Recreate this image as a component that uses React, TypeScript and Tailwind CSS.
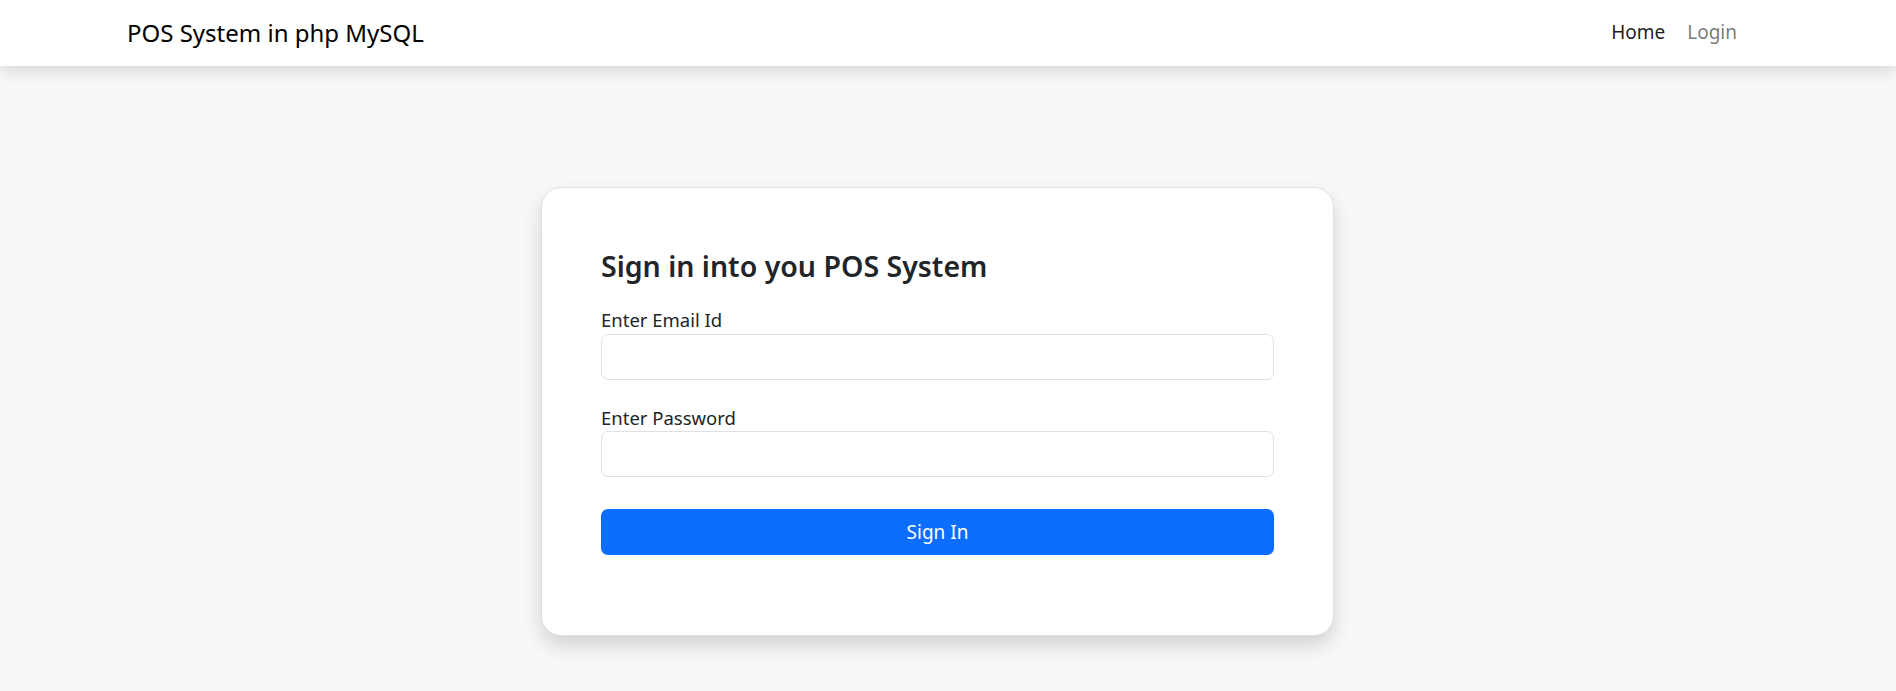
import { useState } from 'react';

export default function App() {
  const [email, setEmail] = useState('');
  const [password, setPassword] = useState('');

  const navLinks = [
    { name: 'Home', active: true },
    { name: 'Login', active: false },
  ];

  return (
    <div className="min-h-screen bg-[#f7f8fa] font-['Noto_Sans','Open_Sans',sans-serif] text-[#212529]">
      <nav className="relative z-10 flex h-[66px] items-center justify-between bg-white pl-[127px] pr-[159px] shadow-[0_6px_14px_rgba(0,0,0,0.12)]">
        <a href="#" className="text-[24px] leading-none text-black">
          POS System in php MySQL
        </a>
        <ul className="flex items-center gap-[22px]">
          {navLinks.map((link) => (
            <li key={link.name}>
              <a
                href="#"
                className={`text-[19px] leading-none ${link.active ? 'text-black/90' : 'text-black/55'}`}
              >
                {link.name}
              </a>
            </li>
          ))}
        </ul>
      </nav>

      <main className="pt-[121px] pb-[56px]">
        <div className="ml-[541px] w-[793px] rounded-[20px] border border-[#dcdfe3] bg-white px-[59px] pt-[60px] pb-[80px] shadow-[0_10px_20px_rgba(0,0,0,0.15)]">
          <h4 className="mb-[20px] text-[28.5px] leading-[36px] font-semibold">Sign in into you POS System</h4>
          <form onSubmit={(e) => e.preventDefault()}>
            <div className="mb-[20px]">
              <label className="block pt-[1px] text-[18.5px] leading-[29px]">Enter Email Id</label>
              <input
                type="email"
                value={email}
                onChange={(e) => setEmail(e.target.value)}
                className="block h-[46px] w-full rounded-[7px] border border-[#dee2e6] bg-white px-[15px] text-[20px] outline-none"
              />
            </div>
            <div className="mb-[32px]">
              <label className="block pt-[4px] text-[18.5px] leading-[27px]">Enter Password</label>
              <input
                type="password"
                value={password}
                onChange={(e) => setPassword(e.target.value)}
                className="block h-[46px] w-full rounded-[7px] border border-[#dee2e6] bg-white px-[15px] text-[20px] outline-none"
              />
            </div>
            <button
              type="submit"
              className="flex h-[46px] w-full items-center justify-center rounded-[7px] bg-[#0d6efd] text-[19px] text-white"
            >
              Sign In
            </button>
          </form>
        </div>
      </main>
    </div>
  );
}
